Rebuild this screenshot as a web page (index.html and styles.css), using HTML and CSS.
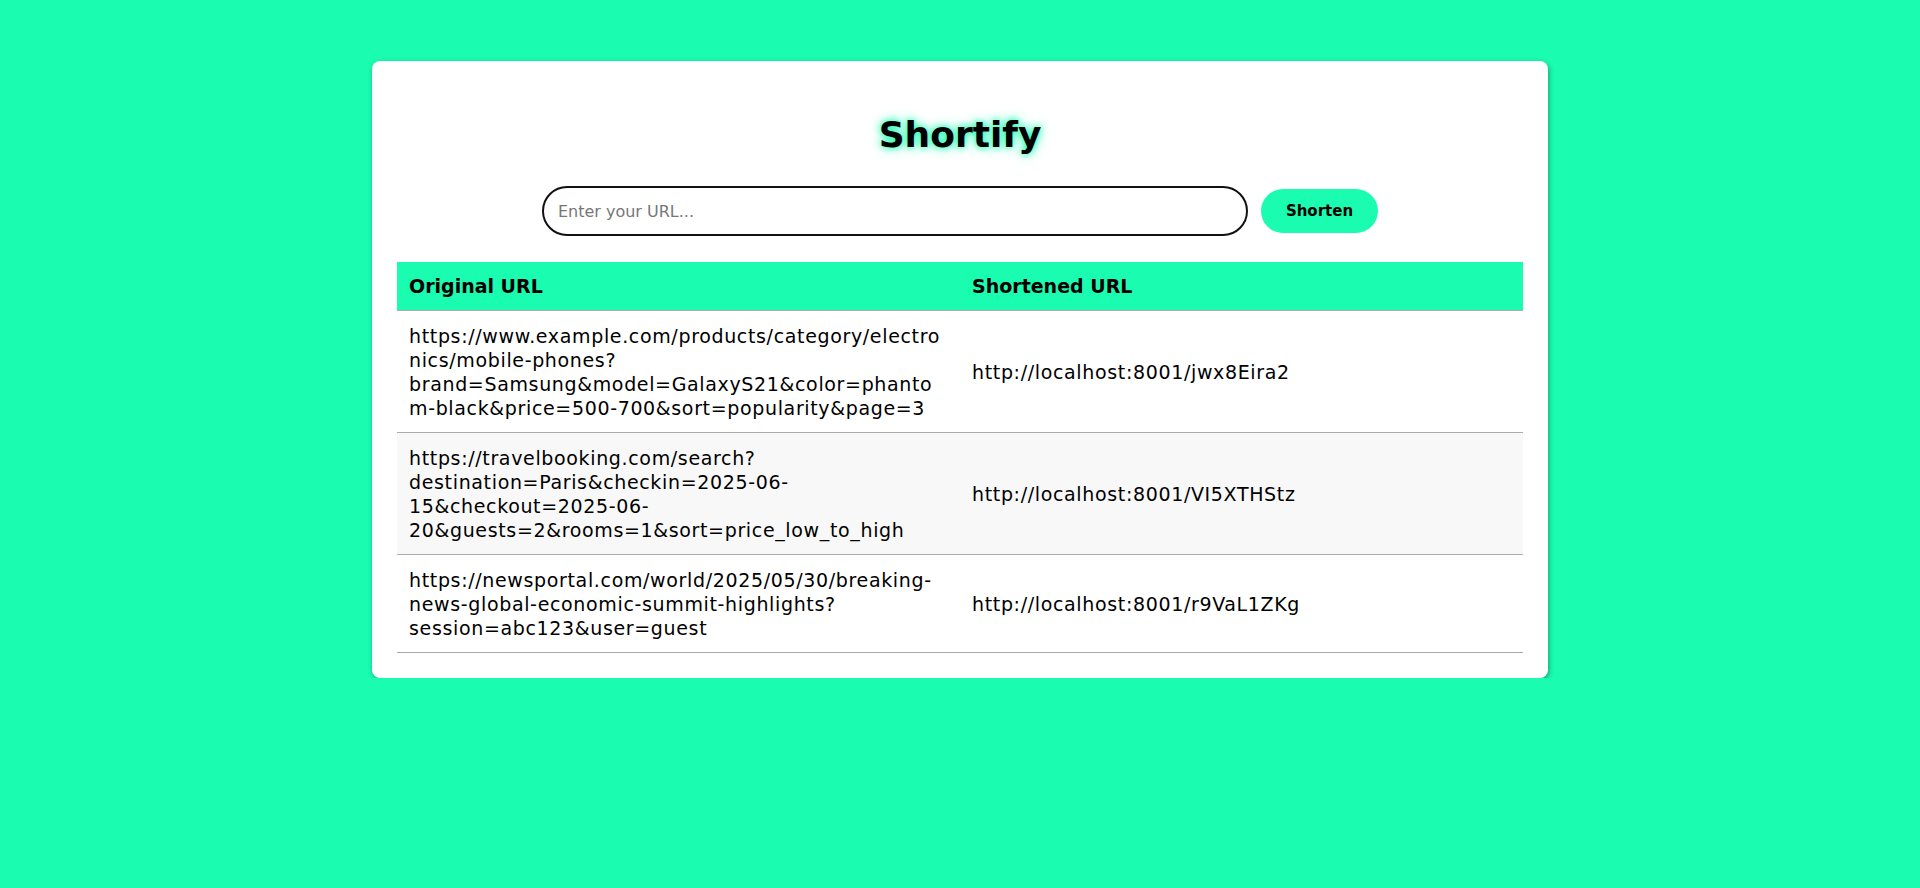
FILE: index.html
```html
<!DOCTYPE html>
<html lang="en">
<head>
<meta charset="utf-8">
<title>Shortify</title>
<link rel="stylesheet" href="styles.css">
</head>
<body>
<main class="card">
  <h1 class="title">Shortify</h1>
  <form class="shorten-form">
    <input class="url-input" type="text" placeholder="Enter your URL...">
    <button class="shorten-btn" type="button">Shorten</button>
  </form>
  <table class="url-table">
    <thead>
      <tr><th>Original URL</th><th>Shortened URL</th></tr>
    </thead>
    <tbody>
      <tr>
        <td>https://www.example.com/products/category/electronics/mobile-phones?brand=Samsung&amp;model=GalaxyS21&amp;color=phantom-black&amp;price=500-700&amp;sort=popularity&amp;page=3</td>
        <td>http://localhost:8001/jwx8Eira2</td>
      </tr>
      <tr>
        <td>https://travelbooking.com/search?destination=Paris&amp;checkin=2025-06-15&amp;checkout=2025-06-20&amp;guests=2&amp;rooms=1&amp;sort=price_low_to_high</td>
        <td>http://localhost:8001/VI5XTHStz</td>
      </tr>
      <tr>
        <td>https://newsportal.com/world/2025/05/30/breaking-news-global-economic-summit-highlights?session=abc123&amp;user=guest</td>
        <td>http://localhost:8001/r9VaL1ZKg</td>
      </tr>
    </tbody>
  </table>
</main>
</body>
</html>
```

FILE: styles.css
```css
* { box-sizing: border-box; }

html, body {
  margin: 0;
  padding: 0;
}

body {
  background: #1afcb0;
  font-family: "DejaVu Sans", "Liberation Sans", sans-serif;
  color: #000;
  padding-top: 61px;
}

.card {
  width: 1176px;
  margin: 0 auto;
  background: #fff;
  border-radius: 8px;
  box-shadow: 1px 2px 5px rgba(0, 0, 0, 0.35);
  padding: 25px;
}

.title {
  margin: 28px 0 30px;
  text-align: center;
  font-size: 36px;
  font-weight: bold;
  line-height: 42px;
  text-shadow: 0 0 6px #1afcb0, 0 0 12px rgba(26, 252, 176, 0.8);
}

.shorten-form {
  display: flex;
  justify-content: center;
  align-items: center;
  gap: 13px;
  margin: 0 0 26px;
}

.url-input {
  width: 706px;
  height: 50px;
  border: 2px solid #111;
  border-radius: 25px;
  padding: 0 14px;
  font-family: "DejaVu Sans", sans-serif;
  font-size: 16px;
  outline: none;
}

.url-input::placeholder {
  color: #777;
}

.shorten-btn {
  height: 44px;
  padding: 0 25px;
  border: none;
  border-radius: 22px;
  background: #1afcb0;
  font-family: "DejaVu Sans", sans-serif;
  font-weight: bold;
  font-size: 15px;
  color: #000;
}

.url-table {
  width: 100%;
  border-collapse: collapse;
  table-layout: fixed;
}

.url-table th {
  background: #1afcb0;
  text-align: left;
  font-size: 19px;
  font-weight: bold;
  line-height: 24px;
  padding: 12px;
  border-bottom: 1px solid #aaa;
}

.url-table td {
  font-size: 19px;
  letter-spacing: 0.65px;
  line-height: 24px;
  padding: 12.5px 12px;
  border-bottom: 1px solid #aaa;
  overflow-wrap: anywhere;
  vertical-align: middle;
}

.url-table tbody tr:nth-child(even) td {
  background: #f8f8f8;
}
```
